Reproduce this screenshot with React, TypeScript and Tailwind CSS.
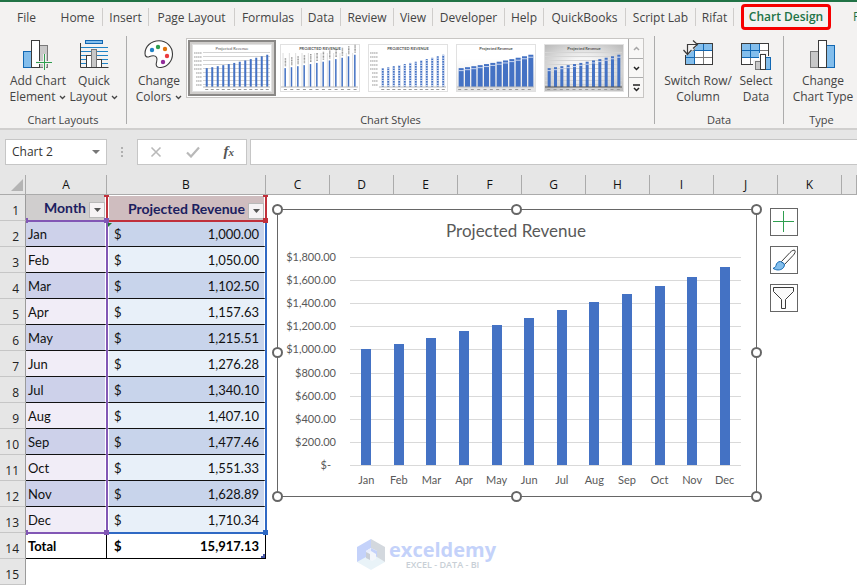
import React, { useState } from "react";

interface Tab {
  label: string;
  width: string;
  divider: boolean;
}

interface MonthRow {
  month: string;
  revenue: number;
}

type ThumbStyle = "plain" | "labels" | "dashed" | "wide" | "grey";

const tabs: Tab[] = [
  { label: "File", width: "w-[53px]", divider: false },
  { label: "Home", width: "w-[50px]", divider: true },
  { label: "Insert", width: "w-[46px]", divider: true },
  { label: "Page Layout", width: "w-[86px]", divider: true },
  { label: "Formulas", width: "w-[67px]", divider: true },
  { label: "Data", width: "w-[39px]", divider: true },
  { label: "Review", width: "w-[53px]", divider: true },
  { label: "View", width: "w-[39px]", divider: true },
  { label: "Developer", width: "w-[72px]", divider: true },
  { label: "Help", width: "w-[39px]", divider: true },
  { label: "QuickBooks", width: "w-[82px]", divider: true },
  { label: "Script Lab", width: "w-[70px]", divider: true },
  { label: "Rifat", width: "w-[38px]", divider: true },
];

const rows: MonthRow[] = [
  { month: "Jan", revenue: 1000 },
  { month: "Feb", revenue: 1050 },
  { month: "Mar", revenue: 1102.5 },
  { month: "Apr", revenue: 1157.63 },
  { month: "May", revenue: 1215.51 },
  { month: "Jun", revenue: 1276.28 },
  { month: "Jul", revenue: 1340.1 },
  { month: "Aug", revenue: 1407.1 },
  { month: "Sep", revenue: 1477.46 },
  { month: "Oct", revenue: 1551.33 },
  { month: "Nov", revenue: 1628.89 },
  { month: "Dec", revenue: 1710.34 },
];

// sum of the unrounded figures, a cent below the sum of the rounded ones
const total = 15917.13;

const columns = ["C", "D", "E", "F", "G", "H", "I", "J", "K"];
const thumbs: ThumbStyle[] = ["plain", "labels", "dashed", "wide", "grey"];

const formatMoney = (value: number): string =>
  value.toLocaleString("en-US", {
    minimumFractionDigits: 2,
    maximumFractionDigits: 2,
  });

const Chevron = () => (
  <svg width="7" height="5" viewBox="0 0 7 5" className="ml-1 inline-block">
    <path d="M1 1l2.5 2.5L6 1" fill="none" stroke="#444" strokeWidth="1.3" />
  </svg>
);

const AddElementIcon = () => (
  <svg width="30" height="30" viewBox="0 0 30 30">
    <rect x="0.5" y="11.5" width="8" height="16" fill="#83beec" stroke="#1268b3" />
    <rect x="16.5" y="5.5" width="8" height="22" fill="#c8c8c8" stroke="#797979" />
    <rect x="8.5" y="0.5" width="8" height="27" fill="#fff" stroke="#3b3b3b" />
    <path d="M21.5 14v16M13 22.5h17" stroke="#f3f2f1" strokeWidth="3" />
    <path d="M21.5 14v16M13 22.5h16" stroke="#2f9e4f" />
  </svg>
);

const QuickLayoutIcon = () => (
  <svg width="30" height="30" viewBox="0 0 30 30">
    <rect x="6.5" y="0.5" width="17" height="3" fill="#83beec" stroke="#1268b3" />
    <path d="M2 7.5h27M2 11.5h27M2 15.5h27M2 19.5h27M2 23.5h27" stroke="#1f83c6" />
    <rect x="7.5" y="15.5" width="5" height="12" fill="#fff" stroke="#3b3b3b" />
    <rect x="17.5" y="19.5" width="5" height="8" fill="#fff" stroke="#3b3b3b" />
    <rect x="12.5" y="9.5" width="5" height="18" fill="#c8c8c8" stroke="#797979" />
    <path d="M1.5 3v24.5h28" fill="none" stroke="#3b3b3b" />
  </svg>
);

const PaletteIcon = () => (
  <svg width="30" height="30" viewBox="0 0 30 30">
    <path
      d="M15 .7C7 .7 1 6.5 1 13.500c0 3 1.800 4 4 3.200 3-1.200 6-1.700 7.500.6 1.600 2.600-.6 5-.3 7.400.3 2.300 2.300 3 4.800 2.800C23.500 27 28.500 21 28.500 14 28.500 6.500 22.500.7 15 .7z"
      fill="#fff"
      stroke="#3b3b3b"
      strokeWidth="1.1"
    />
    <circle cx="8" cy="10" r="2.2" fill="#1f83c6" />
    <circle cx="14" cy="7" r="2.2" fill="#2f9e4f" />
    <circle cx="21" cy="9" r="2.2" fill="#e0730c" />
    <circle cx="23" cy="16" r="2.2" fill="#ec3b3f" />
    <circle cx="19" cy="22" r="2.2" fill="#922c99" />
  </svg>
);

const SwitchIcon = () => (
  <svg width="32" height="30" viewBox="0 0 32 30">
    <rect x="3.5" y="3.5" width="27" height="21" fill="#fff" />
    <path d="M3.5 3.5h27v7h-18v14h-9z" fill="#83beec" />
    <path d="M12.5 3.5v21M21.5 3.5v21M3.5 10.5h27M3.5 17.5h27" stroke="#797979" />
    <path d="M21.5 3.5v7M12.5 10.5h18M12.5 10.5v14M3.5 17.5h9" stroke="#1268b3" />
    <rect x="3.5" y="3.5" width="27" height="21" fill="none" stroke="#3b3b3b" />
    <path d="M0 0h15v6L6 15H0z" fill="#f3f2f1" />
    <path
      d="M5.5 13V3.500H15M11 -.5l4.500 4-4.500 4M1.500 9l4 4.500L9.500 9"
      fill="none"
      stroke="#3b3b3b"
      strokeWidth="1.2"
      transform="translate(0 1)"
    />
  </svg>
);

const SelectDataIcon = () => (
  <svg width="30" height="30" viewBox="0 0 30 30">
    <rect x="0.5" y="3.5" width="27" height="21" fill="#fff" />
    <path d="M.5 3.5h18v14H.5z" fill="#83beec" />
    <path d="M9.5 3.5v21M18.5 3.5v21M.5 10.5h27M.5 17.5h27" stroke="#797979" />
    <path d="M9.5 3.5v14M18.5 3.5v14M.5 10.5h18M.5 17.5h18" stroke="#1268b3" />
    <rect x="0.5" y="3.5" width="27" height="21" fill="none" stroke="#3b3b3b" />
    <path d="M12 20h6v-7h8v3h4v14H12z" fill="#f3f2f1" />
    <rect x="14.5" y="21.5" width="5" height="8" fill="#c8c8c8" stroke="#797979" />
    <rect x="24.5" y="17.5" width="5" height="12" fill="#83beec" stroke="#1268b3" />
    <rect x="19.5" y="14.5" width="5" height="15" fill="#fff" stroke="#3b3b3b" />
  </svg>
);

const ChartTypeIcon = () => (
  <svg width="26" height="30" viewBox="0 0 26 30">
    <rect x="0.5" y="11.5" width="8" height="16" fill="#c8c8c8" stroke="#797979" />
    <rect x="16.5" y="5.5" width="8" height="22" fill="#83beec" stroke="#1268b3" />
    <rect x="8.5" y="0.5" width="8" height="27" fill="#fff" stroke="#3b3b3b" />
  </svg>
);

const StyleThumb = ({ variant }: { variant: ThumbStyle }) => {
  const title = variant === "labels" || variant === "dashed" ? "PROJECTED REVENUE" : "Projected Revenue";
  const wide = variant === "wide" || variant === "grey";
  const hasAxis = variant === "plain" || variant === "dashed";
  const left = hasAxis ? 12 : 2;
  const step = (78 - left) / 12;
  const barWidth = variant === "wide" ? 5 : variant === "grey" ? 3 : variant === "labels" ? 1.5 : 2;
  const grid = [8, 12, 16, 20, 24, 28, 32, 36, 40];

  return (
    <svg width="80" height="48" viewBox="0 0 80 48">
      <defs>
        <radialGradient id="greyFill" r="0.7">
          <stop offset="0.3" stopColor="#f6f6f6" />
          <stop offset="1" stopColor="#b9b9b9" />
        </radialGradient>
        <linearGradient id="wideFill" x2="0" y2="1">
          <stop offset="0.3" stopColor="#fff" />
          <stop offset="1" stopColor="#e2e2e2" />
        </linearGradient>
      </defs>
      <rect
        x="0.5"
        y="0.5"
        width="79"
        height="47"
        fill={variant === "grey" ? "url(#greyFill)" : variant === "wide" ? "url(#wideFill)" : "#fff"}
        stroke="#e1e1e1"
      />
      {variant === "labels" &&
        rows.map((row, i) => (
          <path key={row.month} d={`M${left + step * i + 1} 9v34`} stroke="#dedede" strokeWidth="1" />
        ))}
      {(variant === "plain" || variant === "grey") &&
        grid.map((y) => (
          <path key={y} d={`M${left - 1} ${y + 0.5}h${79 - left}`} stroke="#d4d4d4" strokeWidth="1" />
        ))}
      {hasAxis &&
        grid.map((y) => (
          <path
            key={y}
            d={`M${y > 24 ? 4 : 2} ${y + 1}h${y > 24 ? 6 : 8}`}
            stroke="#999"
            strokeWidth="1.2"
            strokeDasharray="1.5 .4"
          />
        ))}
      {rows.map((row, i) => {
        const height = row.revenue / 53;
        const x = left + step * (i + 0.5) - barWidth / 2;
        return (
          <g key={row.month}>
            <rect x={x} y={43 - height} width={barWidth} height={height} fill="#4472c4" />
            {variant === "dashed" && (
              <path
                d={`M${x + barWidth / 2} 42v${1 - height}`}
                stroke="#fff"
                strokeWidth="2"
                strokeDasharray=".7 1.8"
              />
            )}
            {variant === "labels" && (
              <path d={`M${x + 1} ${41 - height}v-8`} stroke="#999" strokeWidth="1.5" strokeDasharray="1 .4" />
            )}
            {wide && <path d={`M${x - 0.5} ${45.5 - height}h${barWidth + 1}`} stroke="#c9d6f0" strokeWidth="1" />}
            <path d={`M${x - 0.5} 45.5h3`} stroke="#999" strokeWidth="1" />
          </g>
        );
      })}
      <path d={`M${left - 1} 43h${79 - left}`} stroke={variant === "grey" ? "#555" : "#bbb"} strokeWidth="1" />
      <text
        x="40"
        y="6"
        textAnchor="middle"
        fontSize="4"
        fontWeight={variant === "plain" ? 400 : 700}
        fill="#555"
        fontFamily="Lato, sans-serif"
      >
        {title}
      </text>
    </svg>
  );
};

interface RibbonButtonProps {
  icon: React.ReactNode;
  lines: [string, string];
  width: string;
  menu?: boolean;
}

const RibbonButton = ({ icon, lines, width, menu }: RibbonButtonProps) => (
  <button className={`${width} flex shrink-0 flex-col items-center whitespace-nowrap text-xs leading-4`}>
    <span className="flex h-[33px] items-start">{icon}</span>
    <span>{lines[0]}</span>
    <span>
      {lines[1]}
      {menu && <Chevron />}
    </span>
  </button>
);

interface RibbonGroupProps {
  label: string;
  width: string;
  children: React.ReactNode;
}

const RibbonGroup = ({ label, width, children }: RibbonGroupProps) => (
  <section className={`${width} flex h-[88px] shrink-0 flex-col justify-between border-r border-[#acacac]`}>
    <div className="flex pt-1">{children}</div>
    <h2 className="text-center text-[11px] leading-2">{label}</h2>
  </section>
);

const FilterButton = ({ label }: { label: string }) => (
  <button
    aria-label={label}
    className="mt-1 flex h-4 w-4 shrink-0 items-center justify-center border border-[#b9b9b9] bg-[#f6f3f5]"
  >
    <svg width="7" height="4" viewBox="0 0 7 4">
      <path d="M0 0h7L3.5 4z" fill="#555" />
    </svg>
  </button>
);

const RevenueChart = () => {
  const baseY = 262;
  const unit = 208 / 1800;
  const plotLeft = 79;
  const step = 391 / 12;
  const ticks = [0, 200, 400, 600, 800, 1000, 1200, 1400, 1600, 1800];
  const handles = [
    [6, 6],
    [245, 6],
    [485, 6],
    [6, 149],
    [485, 149],
    [6, 293],
    [245, 293],
    [485, 293],
  ];

  return (
    <svg
      width="492"
      height="300"
      viewBox="0 0 492 300"
      role="img"
      aria-label="Projected Revenue chart"
      fontFamily="Lato, sans-serif"
      fill="#595959"
    >
      <rect x="6.5" y="6.5" width="479" height="287" fill="#fff" stroke="#666" />
      <text x="245" y="34" fontSize="17" textAnchor="middle">
        Projected Revenue
      </text>
      {ticks.map((tick) => (
        <g key={tick}>
          <path d={`M${plotLeft} ${Math.round(baseY - tick * unit) + 0.5}h391`} stroke="#d9d9d9" />
          <text
            x={tick === 0 ? 60 : 65}
            y={Math.round(baseY - tick * unit) + 4}
            fontSize="11"
            textAnchor="end"
          >
            {tick === 0 ? "$-" : `$${formatMoney(tick)}`}
          </text>
        </g>
      ))}
      {rows.map((row, i) => {
        const center = plotLeft + step * (i + 0.5);
        const height = Math.round(row.revenue * unit);
        return (
          <g key={row.month}>
            <rect x={Math.round(center - 5)} y={baseY - height} width="10" height={height} fill="#4472c4" />
            <text x={center} y="281" fontSize="11" textAnchor="middle">
              {row.month}
            </text>
          </g>
        );
      })}
      {handles.map(([x, y]) => (
        <circle key={`${x}-${y}`} cx={x + 0.5} cy={y + 0.5} r="4.5" fill="#fff" stroke="#666" strokeWidth="2" />
      ))}
    </svg>
  );
};

const ChartTools = () => (
  <div className="flex flex-col gap-[10px]">
    <button aria-label="Chart elements" className="h-7 w-7 border border-[#666] bg-white">
      <svg width="26" height="26" viewBox="0 0 26 26">
        <path d="M12.5 2v21M2 12.5h21" stroke="#2f9e4f" />
      </svg>
    </button>
    <button aria-label="Chart styles" className="h-7 w-7 border border-[#666] bg-white">
      <svg width="26" height="26" viewBox="0 0 26 26">
        <path
          d="M24 3.500c-1-1-3 0-5 2L10.500 14.500l3 3L22 8.500c2-2 2.500-4 2-5z"
          fill="#fff"
          stroke="#3b3b3b"
        />
        <path
          d="M9.500 14.500c-2.500 0-4 1.500-4.500 4-.3 1.500-1.500 2.500-3 2.800 3 2.200 7.500 2.200 9.800 0 1.500-1.500 2-3 1.200-4.800z"
          fill="#83beec"
          stroke="#1268b3"
        />
      </svg>
    </button>
    <button aria-label="Chart filters" className="h-7 w-7 border border-[#666] bg-white">
      <svg width="26" height="26" viewBox="0 0 26 26">
        <path d="M2.5 2.500h20v4l-8 8v9h-4v-9l-8-8z" fill="#fafafa" stroke="#3b3b3b" />
      </svg>
    </button>
  </div>
);

const Watermark = () => (
  <div className="flex items-center gap-1 font-['Open_Sans',sans-serif]">
    <svg width="28" height="32" viewBox="0 0 28 32">
      <path d="M0 23l14 8 14-8-9-6H9z" fill="#e9f3f8" />
      <path d="M14 0L0 8v15l9-5v-6l5-3z" fill="#c4d2fa" />
      <path d="M14 0l14 8v15l-8-5v-6l-6-3z" fill="#d3d8de" />
      <path d="M9 12l5-3v6l-5 4z" fill="#e9eefc" />
      <path d="M14 9l6 3v6l-6-3z" fill="#c4d2fa" />
      <path d="M14 12l5 3v5l-4 2-5-3v-4z" fill="#f3f6fb" />
      <path d="M9 13l4 2v6l-4-2z" fill="#c9ced6" />
    </svg>
    <div className="flex flex-col items-center">
      <span className="text-xl leading-5 font-bold text-[#c4d2fa]">exceldemy</span>
      <span className="text-[9px] leading-[10px] font-semibold text-[#c8cfd6]">EXCEL - DATA - BI</span>
    </div>
  </div>
);

const Ribbon = () => (
  <header className="overflow-hidden border-t-2 border-b-2 border-t-[#217346] border-b-[#d0cfce] bg-[#f3f2f1] text-[#444]">
    <nav className="flex h-[34px] items-start pt-[2px]">
      {tabs.map((tab) => (
        <button
          key={tab.label}
          className={`${tab.width} mt-1 h-[18px] shrink-0 text-xs leading-5 whitespace-nowrap ${
            tab.divider ? "border-r border-[#cfcdcb]" : ""
          }`}
        >
          {tab.label}
        </button>
      ))}
      <button className="ml-[7px] h-[26px] w-[90px] shrink-0 rounded-sm border-3 border-[#f60000] text-xs leading-5 font-semibold whitespace-nowrap text-[#217346]">
        Chart Design
      </button>
      <button className="ml-[22px] h-[26px] shrink-0 text-xs text-[#217346]">Format</button>
    </nav>

    <div className="flex pb-1">
      <RibbonGroup label="Chart Layouts" width="w-[127px]">
        <RibbonButton icon={<AddElementIcon />} lines={["Add Chart", "Element"]} width="w-[66px] ml-[5px]" menu />
        <RibbonButton icon={<QuickLayoutIcon />} lines={["Quick", "Layout"]} width="w-[46px]" menu />
      </RibbonGroup>

      <RibbonGroup label="Chart Styles" width="w-[528px]">
        <RibbonButton icon={<PaletteIcon />} lines={["Change", "Colors"]} width="w-[54px] ml-[5px]" menu />
        <div className="-mt-[2px] flex h-[60px] border border-[#c8c6c4] bg-white">
          {thumbs.map((variant) => (
            <button
              key={variant}
              aria-label={`Style ${variant}`}
              className={`my-px flex h-14 w-[88px] items-center justify-center first:ml-px ${
                variant === "plain" ? "border-2 border-[#8a8886] bg-[#cfcdcb]" : ""
              }`}
            >
              <StyleThumb variant={variant} />
            </button>
          ))}
          <div className="flex w-[15px] flex-col divide-y divide-[#acacac] border-l border-[#acacac] bg-[#f8f7f6]">
            <button aria-label="Scroll up" className="flex flex-1 items-center justify-center">
              <svg width="7" height="5" viewBox="0 0 7 5">
                <path d="M1 4l2.5-2.500L6 4" fill="none" stroke="#a6a6a6" strokeWidth="1.5" />
              </svg>
            </button>
            <button aria-label="Scroll down" className="flex flex-1 items-center justify-center">
              <svg width="7" height="5" viewBox="0 0 7 5">
                <path d="M1 1l2.5 2.500L6 1" fill="none" stroke="#222" strokeWidth="1.5" />
              </svg>
            </button>
            <button aria-label="More styles" className="flex flex-1 items-center justify-center">
              <svg width="7" height="8" viewBox="0 0 7 8">
                <path d="M0 1h7M1 4l2.5 2.500L6 4" fill="none" stroke="#222" strokeWidth="1.5" />
              </svg>
            </button>
          </div>
        </div>
      </RibbonGroup>

      <RibbonGroup label="Data" width="w-[129px]">
        <RibbonButton icon={<SwitchIcon />} lines={["Switch Row/", "Column"]} width="w-[76px] ml-[5px]" />
        <RibbonButton icon={<SelectDataIcon />} lines={["Select", "Data"]} width="w-10" />
      </RibbonGroup>

      <RibbonGroup label="Type" width="w-[76px]">
        <RibbonButton icon={<ChartTypeIcon />} lines={["Change", "Chart Type"]} width="w-[68px] ml-[5px]" />
      </RibbonGroup>
    </div>
  </header>
);

const FormulaBar = () => {
  const [name, setName] = useState("Chart 2");
  const [formula, setFormula] = useState("");

  return (
    <div className="flex h-[45px] items-center pb-0.5 pl-[5px]">
      <div className="flex h-[26px] w-[102px] items-center border border-[#c6c6c6] bg-white pr-1">
        <input
          aria-label="Name box"
          value={name}
          onChange={(e) => setName(e.target.value)}
          className="min-w-0 flex-1 pl-1.5 text-xs text-[#333] outline-none"
        />
        <button aria-label="Names" className="px-0.5">
          <svg width="8" height="4" viewBox="0 0 8 4">
            <path d="M0 0h8L4 4z" fill="#777" />
          </svg>
        </button>
      </div>
      <svg width="30" height="12" viewBox="0 0 30 12">
        <path d="M14 1h2v2h-2zM14 5h2v2h-2zM14 9h2v2h-2z" fill="#b0b0b0" />
      </svg>
      <div className="flex h-[26px] w-[110px] items-center justify-between border border-[#c6c6c6] bg-white px-3">
        <button aria-label="Cancel">
          <svg width="12" height="12" viewBox="0 0 12 12">
            <path d="M1.5 1.500l9 9M10.500 1.500l-9 9" stroke="#b9b9b9" strokeWidth="1.6" />
          </svg>
        </button>
        <button aria-label="Enter">
          <svg width="14" height="12" viewBox="0 0 14 12">
            <path d="M1 6.500l4 4L13 1.500" fill="none" stroke="#b9b9b9" strokeWidth="2.2" />
          </svg>
        </button>
        <button
          aria-label="Insert function"
          className="font-['Liberation_Serif',serif] text-[15px] leading-4 font-bold text-[#555] italic"
        >
          f<span className="text-[11px]">x</span>
        </button>
      </div>
      <input
        aria-label="Formula bar"
        value={formula}
        onChange={(e) => setFormula(e.target.value)}
        className="ml-[3px] h-[26px] min-w-0 flex-1 border border-r-0 border-[#c6c6c6] bg-white px-2 text-xs outline-none"
      />
    </div>
  );
};

const columnHead = "border-r border-b border-[#ababab] bg-[#e6e6e6] p-0 text-xs font-normal";
const rowHead =
  "border-r border-b border-r-[#9b9b9b] border-b-[#c6c6c6] bg-[#e6e6e6] p-0 pr-1.5 pt-1.5 text-right font-['Open_Sans',sans-serif] text-xs leading-4 font-normal text-[#222]";

const Sheet = () => (
  <main className="relative flex-1 overflow-hidden bg-white">
    <table className="w-full table-fixed border-separate border-spacing-0 text-[#111]">
      <colgroup>
        <col className="w-[26px]" />
        <col className="w-[81px]" />
        <col className="w-[159px]" />
        {columns.map((column) => (
          <col key={column} className="w-16" />
        ))}
        <col />
      </colgroup>
      <thead>
        <tr className="h-5">
          <th className={columnHead}>
            <svg width="12" height="12" viewBox="0 0 12 12" className="mr-0.5 ml-auto">
              <path d="M12 0v12H0z" fill="#b4b4b4" />
            </svg>
          </th>
          <th className={columnHead}>A</th>
          <th className={columnHead}>B</th>
          {columns.map((column) => (
            <th key={column} className={columnHead}>
              {column}
            </th>
          ))}
          <th className={columnHead} />
        </tr>
      </thead>
      <tbody className="font-[Lato,sans-serif] text-[13px] leading-4">
        <tr className="h-[26px] text-sm font-bold text-[#1b2060]">
          <th className={rowHead}>1</th>
          <td className="border-r-2 border-white bg-[#d0cece] p-0">
            <div className="flex items-center justify-end gap-[3px]">
              Month
              <FilterButton label="Filter Month" />
            </div>
          </td>
          <td className="border-x-2 border-t border-white bg-[#cfbdbf] p-0">
            <div className="flex items-center justify-end gap-[3px] whitespace-nowrap">
              Projected Revenue
              <FilterButton label="Filter Projected Revenue" />
            </div>
          </td>
        </tr>
        {rows.map((row, i) => (
          <tr key={row.month} className="h-[26px]">
            <th className={rowHead}>{i + 2}</th>
            <td
              className={`border-r-2 border-b border-r-white border-b-[#111] p-0 pl-0.5 ${
                i % 2 === 0 ? "bg-[#cdd1ea]" : "bg-[#f1edf7]"
              }`}
            >
              {row.month}
            </td>
            <td
              className={`border-x-2 border-b border-x-white border-b-[#111] p-0 ${
                i % 2 === 0 ? "bg-[#c8d4eb]" : "bg-[#e8f0f9]"
              }`}
            >
              <div className="flex justify-between px-[5px]">
                <span>$</span>
                <span>{formatMoney(row.revenue)}</span>
              </div>
            </td>
          </tr>
        ))}
        <tr className="h-[26px] font-bold text-black">
          <th className={rowHead}>14</th>
          <td className="border-r border-b border-black p-0 pl-0.5">Total</td>
          <td className="border-r border-b border-black p-0">
            <div className="flex justify-between pr-1.5 pl-[7px]">
              <span>$</span>
              <span>{formatMoney(total)}</span>
            </div>
          </td>
        </tr>
        <tr className="h-[26px]">
          <th className={rowHead}>15</th>
        </tr>
      </tbody>
    </table>

    {/* source range outlines: title red, categories purple, values blue */}
    <div className="absolute top-[21px] left-[106px] h-[26px] w-[161px] border-2 border-t-0 border-[#c0303b]" />
    <div className="absolute top-[47px] left-[106px] h-[312px] w-[161px] border-2 border-t-0 border-[#2f69c4]" />
    <div className="absolute top-[45px] left-[26px] h-[314px] w-[82px] border-y-2 border-r-2 border-[#8257b5]" />
    <div className="absolute top-[20px] left-[104px] h-[2px] w-[5px] bg-[#c0303b]" />
    <div className="absolute top-[20px] left-[263px] h-[2px] w-[5px] bg-[#c0303b]" />
    <div className="absolute top-[43px] left-[26px] h-[5px] w-[2px] bg-[#8257b5]" />
    <div className="absolute top-[355px] left-[26px] h-[5px] w-[2px] bg-[#8257b5]" />
    <div className="absolute top-[43px] left-[104px] h-[5px] w-[5px] bg-[#8257b5]" />
    <div className="absolute top-[355px] left-[104px] h-[5px] w-[5px] bg-[#8257b5]" />
    <div className="absolute top-[43px] left-[263px] h-[5px] w-[5px] bg-[#c0303b]" />
    <div className="absolute top-[355px] left-[263px] h-[5px] w-[5px] bg-[#2f69c4]" />
    {/* error marker of B2 and resize corner of the table */}
    <svg width="4" height="4" viewBox="0 0 4 4" className="absolute top-[48px] left-[108px]">
      <path d="M0 0h4L0 4z" fill="#1d7a35" />
    </svg>
    <svg width="4" height="4" viewBox="0 0 4 4" className="absolute top-[379px] left-[261px]">
      <path d="M4 0v4H0V2h2V0z" fill="#4757a6" />
    </svg>

    <div className="absolute top-7 left-[271px]">
      <RevenueChart />
    </div>
    <div className="absolute top-[33px] left-[770px]">
      <ChartTools />
    </div>
    <div className="absolute top-[364px] left-[357px]">
      <Watermark />
    </div>
  </main>
);

const App: React.FC = () => (
  <div className="flex h-screen flex-col overflow-hidden bg-[#e6e6e6] font-['Open_Sans',sans-serif]">
    <Ribbon />
    <FormulaBar />
    <Sheet />
  </div>
);

export default App;
